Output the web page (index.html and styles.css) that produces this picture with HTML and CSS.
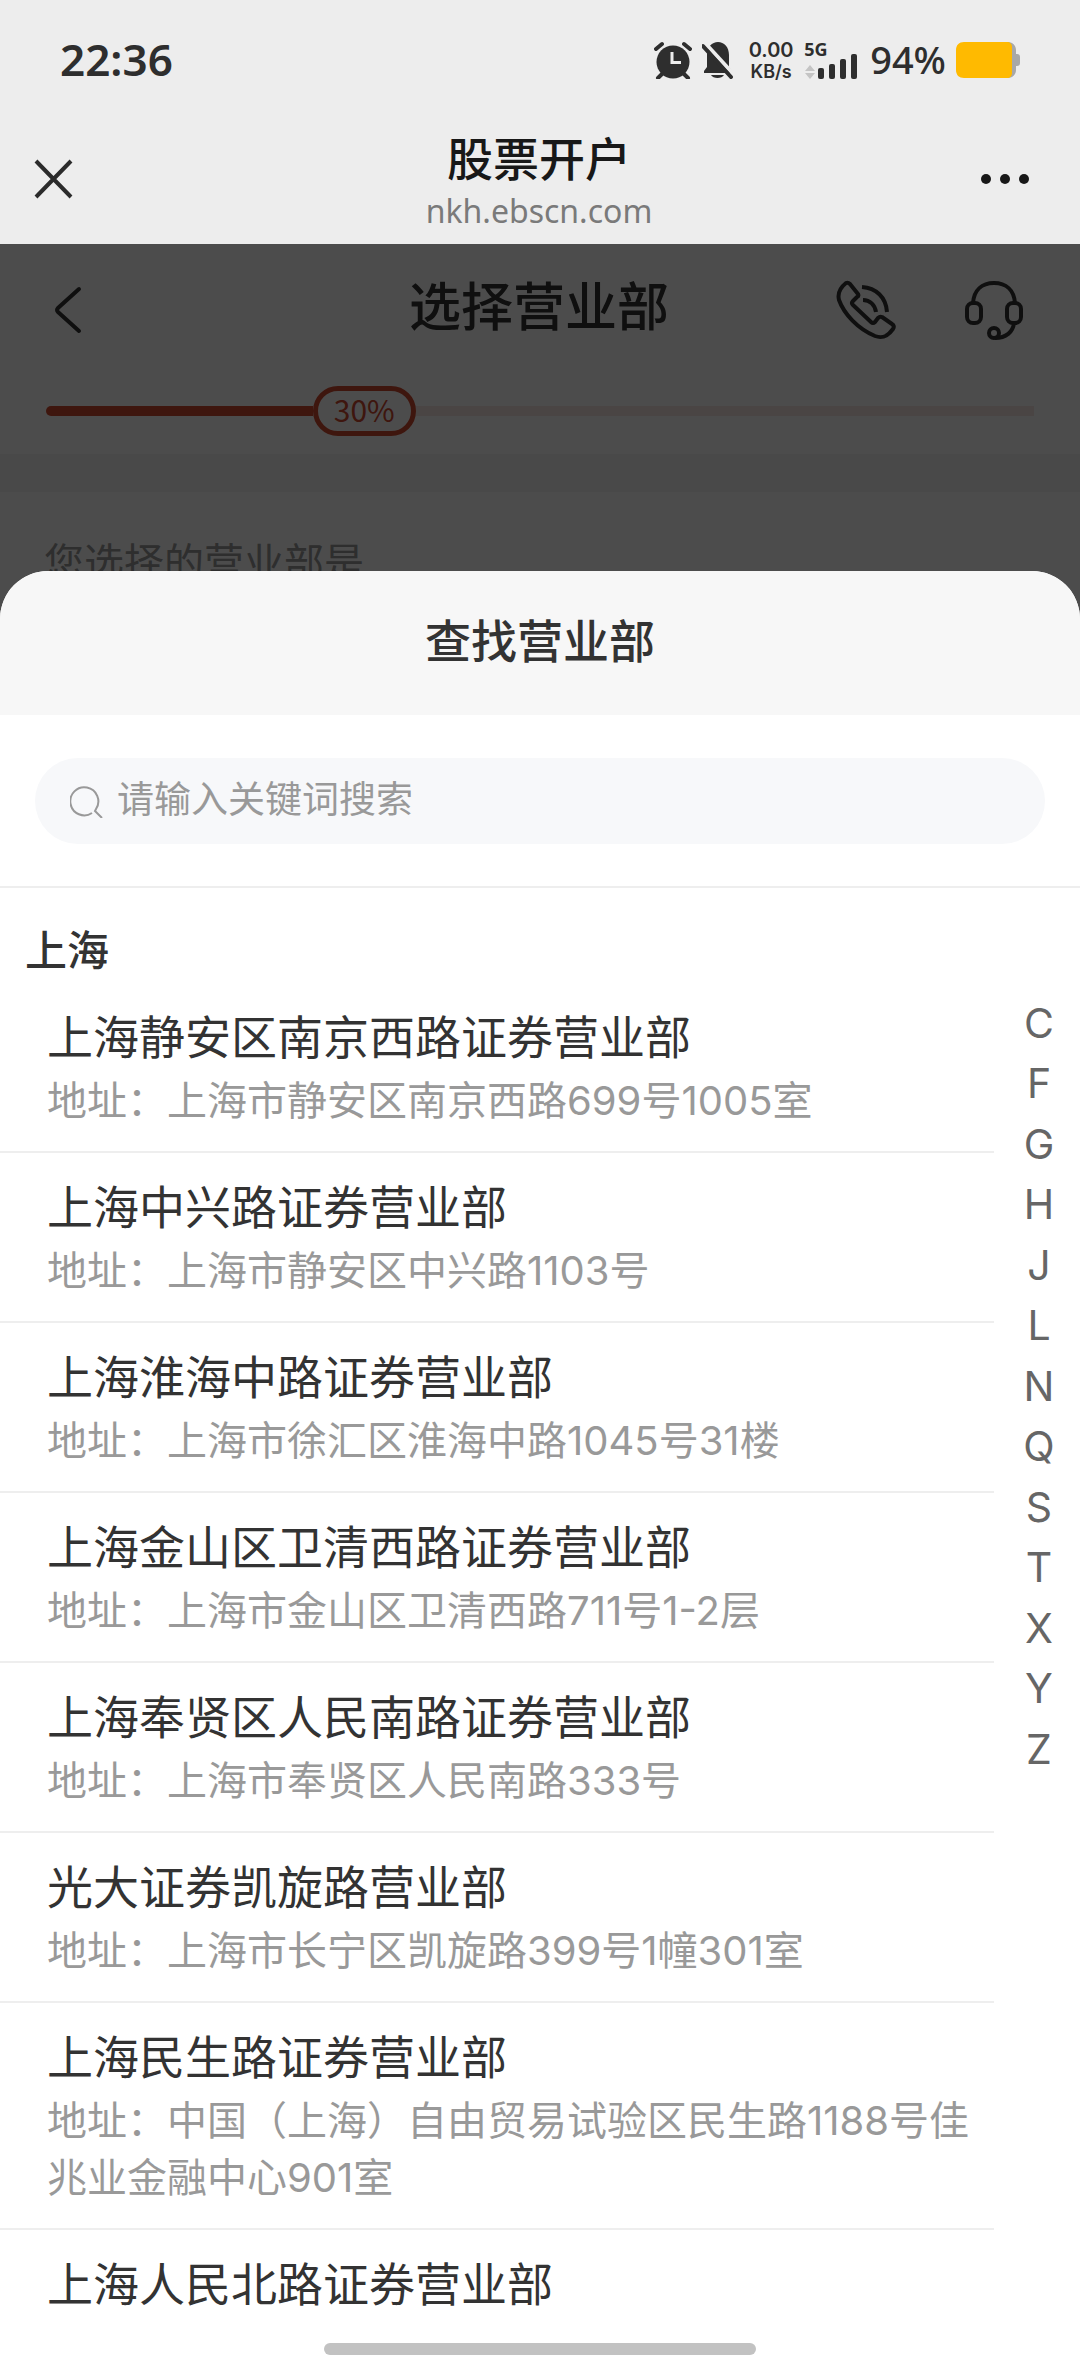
FILE: index.html
```html
<!DOCTYPE html>
<html lang="zh-CN">
<head>
    <meta charset="UTF-8">
    <meta name="viewport" content="width=device-width, initial-scale=1.0">
    <title>股票开户</title>
    <link rel="stylesheet" href="styles.css">
</head>
<body>
    <div class="status-bar">
        <span class="time">22:36</span>
        <div class="status-icons">
            <svg class="icon-alarm" width="38" height="38" viewBox="0 0 38 38">
                <circle cx="19" cy="21" r="16.500" fill="#2e2e2e"/>
                <path d="M2 8l6-5M36 8l-6-5M8 33l-4 4M30 33l4 4" stroke="#2e2e2e" stroke-width="4" stroke-linecap="round"/>
                <path d="M18 11v10.500h9" fill="none" stroke="#ededed" stroke-width="3"/>
            </svg>
            <svg class="icon-bell" width="32" height="38" viewBox="0 0 32 38">
                <path d="M2 32v-2l3-4V14C5 6 10 1 16 1s11 5 11 13v12l3 4v2z" fill="#2e2e2e"/>
                <path d="M9 34h13c-2 4-11 4-13 0z" fill="#2e2e2e"/>
                <path d="M3 2l31 34" stroke="#ededed" stroke-width="4"/>
                <path d="M1 5l28 31" stroke="#2e2e2e" stroke-width="4" stroke-linecap="round"/>
            </svg>
            <div class="speed">
                <span class="speed-value">0.00</span>
                <span class="speed-unit">KB/s</span>
            </div>
            <div class="signal">
                <span class="network">5G</span>
                <svg width="56" height="26" viewBox="0 0 56 26">
                    <path d="M1 18l5-6 5 6zM1 20h10l-5 6z" fill="#c4c4c4"/>
                    <rect x="14" y="15" width="6" height="11" rx="2" fill="#2e2e2e"/>
                    <rect x="25" y="11" width="6" height="15" rx="2" fill="#2e2e2e"/>
                    <rect x="36" y="6" width="6" height="20" rx="2" fill="#2e2e2e"/>
                    <rect x="47" y="1" width="6" height="25" rx="2" fill="#2e2e2e"/>
                </svg>
            </div>
            <span class="battery-text">94%</span>
            <svg class="icon-battery" width="64" height="36" viewBox="0 0 64 36">
                <path d="M8 0h44c5 0 8 4 8 8v4h1c2 0 3 1 3 3v6c0 2-1 3-3 3h-1v4c0 4-3 8-8 8H8z" fill="#a8a8a8"/>
                <path d="M8 0h43c3 0 5 2 5 5v26c0 3-2 5-5 5H8c-5 0-8-3-8-8V8c0-5 3-8 8-8z" fill="#ffba00"/>
            </svg>
        </div>
    </div>

    <header class="browser-bar">
        <button class="icon-button" aria-label="关闭">
            <svg width="40" height="40" viewBox="0 0 40 40">
                <path d="M2 2l35 36M37 2L2 38" stroke="#2b2b2b" stroke-width="4"/>
            </svg>
        </button>
        <div class="browser-title">
            <h1>股票开户</h1>
            <span>nkh.ebscn.com</span>
        </div>
        <button class="icon-button more" aria-label="更多">
            <svg width="50" height="12" viewBox="0 0 50 12">
                <circle cx="6" cy="6" r="5" fill="#181818"/>
                <circle cx="25" cy="6" r="5" fill="#181818"/>
                <circle cx="44" cy="6" r="5" fill="#181818"/>
            </svg>
        </button>
    </header>

    <main class="content">
        <div class="page">
            <div class="page-bar">
                <button class="icon-button" aria-label="返回">
                    <svg width="28" height="48" viewBox="0 0 28 48">
                        <path d="M25 3L4 22q-2 2 0 4l21 19" fill="none" stroke="#333" stroke-width="4" stroke-linecap="round"/>
                    </svg>
                </button>
                <h2>选择营业部</h2>
                <div class="page-actions">
                    <button class="icon-button" aria-label="电话">
                        <svg width="60" height="60" viewBox="0 0 60 60" fill="none" stroke="#333" stroke-width="4" stroke-linejoin="round">
                            <path d="M10 3q2-1 4 1l8 10q1 2-1 3l-4 4q-2 2 0 4l18 17q2 2 4 0l3-4q2-2 4-1l10 7q3 2 1 5c-5 7-10 10-18 7C22 49 8 34 3 20 1 12 5 7 10 3z"/>
                            <path d="M26 7c14 1 24 10 25 25M27 20c7 0 12 5 13 12"/>
                        </svg>
                    </button>
                    <button class="icon-button" aria-label="客服">
                        <svg width="60" height="60" viewBox="0 0 60 60" fill="none" stroke="#333" stroke-width="4">
                            <path d="M9 23C10 10 18 3 30 3s20 7 21 20"/>
                            <rect x="3" y="23" width="14" height="20" rx="6"/>
                            <rect x="43" y="23" width="14" height="20" rx="6"/>
                            <path d="M50 43c-1 9-8 15-19 15"/>
                            <circle cx="30" cy="53" r="5"/>
                        </svg>
                    </button>
                </div>
            </div>
            <div class="progress">
                <div class="progress-done"></div>
                <span class="progress-label">30%</span>
                <div class="progress-rest"></div>
            </div>
            <div class="page-gap"></div>
            <p class="page-hint">您选择的营业部是</p>
        </div>

        <div class="overlay">
            <section class="sheet">
                <h2 class="sheet-title">查找营业部</h2>
                <div class="search">
                    <label class="search-box">
                        <svg width="34" height="34" viewBox="0 0 34 34" fill="none" stroke="#999" stroke-width="2">
                            <path d="M22 29A14 14 0 1 1 26 25l-1 2 7 7"/>
                        </svg>
                        <input type="text" placeholder="请输入关键词搜索" aria-label="搜索营业部">
                    </label>
                </div>
                <div class="branches">
                    <div class="branch-list">
                        <h3 class="city">上海</h3>
                        <ul>
                            <li class="branch">
                                <h4>上海静安区南京西路证券营业部</h4>
                                <p>地址：上海市静安区南京西路699号1005室</p>
                            </li>
                            <li class="branch">
                                <h4>上海中兴路证券营业部</h4>
                                <p>地址：上海市静安区中兴路1103号</p>
                            </li>
                            <li class="branch">
                                <h4>上海淮海中路证券营业部</h4>
                                <p>地址：上海市徐汇区淮海中路1045号31楼</p>
                            </li>
                            <li class="branch">
                                <h4>上海金山区卫清西路证券营业部</h4>
                                <p>地址：上海市金山区卫清西路711号1-2层</p>
                            </li>
                            <li class="branch">
                                <h4>上海奉贤区人民南路证券营业部</h4>
                                <p>地址：上海市奉贤区人民南路333号</p>
                            </li>
                            <li class="branch">
                                <h4>光大证券凯旋路营业部</h4>
                                <p>地址：上海市长宁区凯旋路399号1幢301室</p>
                            </li>
                            <li class="branch">
                                <h4>上海民生路证券营业部</h4>
                                <p>地址：中国（上海）自由贸易试验区民生路1188号佳兆业金融中心901室</p>
                            </li>
                            <li class="branch">
                                <h4>上海人民北路证券营业部</h4>
                            </li>
                        </ul>
                    </div>
                    <nav class="letters">
                        <a href="#C">C</a>
                        <a href="#F">F</a>
                        <a href="#G">G</a>
                        <a href="#H">H</a>
                        <a href="#J">J</a>
                        <a href="#L">L</a>
                        <a href="#N">N</a>
                        <a href="#Q">Q</a>
                        <a href="#S">S</a>
                        <a href="#T">T</a>
                        <a href="#X">X</a>
                        <a href="#Y">Y</a>
                        <a href="#Z">Z</a>
                    </nav>
                </div>
                <div class="home-indicator"><span></span></div>
            </section>
        </div>
    </main>
</body>
</html>
```
FILE: styles.css
```css
* {
    margin: 0;
    padding: 0;
    box-sizing: border-box;
}

body {
    font-family: 'Inter', 'Noto Sans CJK SC', sans-serif;
    background-color: #ededed;
    color: #333;
    display: flex;
    flex-direction: column;
    height: 100vh;
    overflow: hidden;
}

h1, h2, h3, h4 {
    font-weight: 500;
}

ul {
    list-style: none;
}

svg {
    display: block;
    flex: none;
}

.icon-button {
    background: none;
    border: none;
    cursor: pointer;
}

/* phone status bar */
.status-bar {
    display: flex;
    justify-content: space-between;
    align-items: center;
    height: 120px;
    padding: 0 60px;
    color: #2e2e2e;
    font-family: 'Noto Sans', sans-serif;
}

.time {
    font-size: 44px;
    font-weight: 600;
    line-height: 60px;
    padding-bottom: 2px;
}

.status-icons {
    display: flex;
    align-items: center;
    gap: 10px;
}

.speed {
    display: flex;
    flex-direction: column;
    align-items: center;
    width: 46px;
    margin-left: 4px;
    font-family: 'Inter', sans-serif;
    font-weight: 600;
}

.speed-value {
    font-size: 20px;
    line-height: 24px;
}

.speed-unit {
    font-size: 18px;
    line-height: 20px;
}

.signal {
    display: flex;
    flex-direction: column;
}

.network {
    font-size: 18px;
    font-weight: 700;
    line-height: 14px;
    height: 11px;
}

.battery-text {
    font-size: 38px;
    font-weight: 500;
    line-height: 52px;
    padding-bottom: 2px;
}

/* in-app browser bar */
.browser-bar {
    display: grid;
    grid-template-columns: 1fr auto 1fr;
    align-items: center;
    height: 124px;
    padding: 0 50px 0 34px;
}

.browser-bar .icon-button {
    justify-self: start;
    padding-bottom: 6px;
}

.browser-bar .more {
    justify-self: end;
}

.browser-title {
    display: flex;
    flex-direction: column;
    align-items: center;
    padding-left: 14px;
    color: #181818;
}

.browser-title h1 {
    font-size: 46px;
    line-height: 58px;
}

.browser-title span {
    font-family: 'Noto Sans', sans-serif;
    font-size: 32px;
    line-height: 46px;
    color: #7a7a7a;
}

/* page behind the sheet */
.content {
    position: relative;
    flex: 1;
    min-height: 0;
    background-color: #fff;
}

.page-bar {
    display: grid;
    grid-template-columns: 1fr auto 1fr;
    align-items: center;
    height: 132px;
    padding: 0 56px 0 54px;
}

.page-bar .icon-button {
    justify-self: start;
}

.page-bar h2 {
    padding-bottom: 5px;
    font-size: 52px;
    line-height: 72px;
}

.page-actions {
    display: flex;
    justify-content: flex-end;
    gap: 68px;
}

.progress {
    display: flex;
    align-items: center;
    height: 70px;
    padding: 0 46px;
    margin-bottom: 8px;
}

.progress-done {
    width: 27%;
    height: 10px;
    border-radius: 5px 0 0 5px;
    background-color: #d04a30;
}

.progress-label {
    width: 103px;
    height: 50px;
    border: 5px solid #d04a30;
    border-radius: 25px;
    color: #d04a30;
    font-family: 'Noto Sans CJK SC', sans-serif;
    font-size: 30px;
    line-height: 36px;
    text-align: center;
}

.progress-rest {
    flex: 1;
    height: 10px;
    background-color: #f7e8e4;
}

.page-gap {
    height: 38px;
    background-color: #f3f3f3;
}

.page-hint {
    padding: 42px 44px;
    color: #999;
    font-size: 40px;
    line-height: 57px;
}

/* branch picker */
.overlay {
    position: absolute;
    inset: 0;
    display: flex;
    padding-top: 327px;
    background-color: rgba(0, 0, 0, 0.7);
}

.sheet {
    flex: 1;
    display: flex;
    flex-direction: column;
    background-color: #fff;
    border-radius: 48px 48px 0 0;
    overflow: hidden;
}

.sheet-title {
    padding-bottom: 4px;
    background-color: #f7f7f7;
    font-size: 46px;
    line-height: 140px;
    text-align: center;
}

.search {
    padding: 43px 35px 42px;
    border-bottom: 2px solid #eee;
}

.search-box {
    display: flex;
    align-items: center;
    gap: 13px;
    height: 86px;
    padding: 0 35px;
    border-radius: 43px;
    background-color: #f7f8fa;
}

.search-box input {
    flex: 1;
    min-width: 0;
    padding-bottom: 4px;
    border: none;
    outline: none;
    background: none;
    font-family: inherit;
    font-size: 37px;
    color: #333;
}

.search-box input::placeholder {
    color: #999;
}

.branches {
    flex: 1;
    min-height: 0;
    display: flex;
    overflow: hidden;
}

.branch-list {
    flex: 1;
}

.city {
    padding: 31px 25px 0;
    font-size: 42px;
    line-height: 64px;
}

.branch {
    padding: 22px 0 22px 47px;
    border-bottom: 2px solid #eee;
}

.branch h4 {
    margin-bottom: 3px;
    font-size: 46px;
    font-weight: 400;
    line-height: 64px;
}

.branch p {
    font-size: 40px;
    line-height: 57px;
    color: #999;
}

.letters {
    display: grid;
    width: 86px;
    height: 786px;
    margin-top: 105px;
    padding-left: 4px;
    text-align: center;
}

.letters a {
    color: #666;
    font-size: 41px;
    line-height: 60px;
    text-decoration: none;
}

.home-indicator {
    display: flex;
    justify-content: center;
    height: 56px;
    padding-top: 23px;
}

.home-indicator span {
    width: 40%;
    height: 12px;
    border-radius: 6px;
    background-color: #c2c2c2;
}
```
